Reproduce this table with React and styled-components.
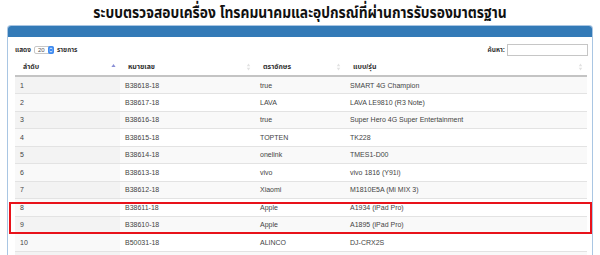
import React from "react";
import styled, { createGlobalStyle } from "styled-components";

const rows = [
  ["1", "B38618-18", "true", "SMART 4G Champion"],
  ["2", "B38617-18", "LAVA", "LAVA LE9810 (R3 Note)"],
  ["3", "B38616-18", "true", "Super Hero 4G Super Entertainment"],
  ["4", "B38615-18", "TOPTEN", "TK228"],
  ["5", "B38614-18", "onelink", "TMES1-D00"],
  ["6", "B38613-18", "vivo", "vivo 1816 (Y91i)"],
  ["7", "B38612-18", "Xiaomi", "M1810E5A (Mi MIX 3)"],
  ["8", "B38611-18", "Apple", "A1934 (iPad Pro)"],
  ["9", "B38610-18", "Apple", "A1895 (iPad Pro)"],
  ["10", "B50031-18", "ALINCO", "DJ-CRX2S"],
  ["", "", "", ""],
];

const columns = [
  { label: "ลำดับ", width: 105, active: true },
  { label: "หมายเลข", width: 135 },
  { label: "ตราอักษร", width: 90 },
  { label: "แบบ/รุ่น", width: 242 },
];

const ROW_H = 17.5;

function SortIcon({ active }) {
  if (active) {
    return (
      <svg width="5" height="8" viewBox="0 0 5 8">
        <path d="M2.5 1 L4.6 4 L0.4 4 Z" fill="#8a8fd6" />
      </svg>
    );
  }
  return (
    <svg width="5" height="8" viewBox="0 0 5 8">
      <path d="M2.5 0.5 L4.2 3.2 L0.8 3.2 Z" fill="#e2e2e2" />
      <path d="M2.5 7.5 L4.2 4.8 L0.8 4.8 Z" fill="#e2e2e2" />
    </svg>
  );
}

export default function App() {
  return (
    <>
      <GlobalStyle />
      <Page>
        <Title>ระบบตรวจสอบเครื่อง โทรคมนาคมและอุปกรณ์ที่ผ่านการรับรองมาตรฐาน</Title>
        <Panel>
          <PanelHeading />
          <PanelBody>
            <Controls>
              <LengthControl>
                แสดง
                <Select>
                  <span>20</span>
                  <Stepper>
                    <svg width="4" height="6" viewBox="0 0 4 6">
                      <path d="M0.5 2.3 L2 0.8 L3.5 2.3" stroke="#fff" strokeWidth="0.8" fill="none" />
                      <path d="M0.5 3.7 L2 5.2 L3.5 3.7" stroke="#fff" strokeWidth="0.8" fill="none" />
                    </svg>
                  </Stepper>
                </Select>
                รายการ
              </LengthControl>
              <SearchControl>
                ค้นหา:
                <SearchInput />
              </SearchControl>
            </Controls>
            <TableWrap>
              <Table>
                <colgroup>
                  {columns.map((c) => (
                    <col key={c.label} style={{ width: c.width }} />
                  ))}
                </colgroup>
                <thead>
                  <tr>
                    {columns.map((c) => (
                      <Th key={c.label}>
                        <HeadInner>
                          <span>{c.label}</span>
                          <SortIcon active={c.active} />
                        </HeadInner>
                      </Th>
                    ))}
                  </tr>
                </thead>
                <tbody>
                  {rows.map((r, i) => (
                    <Tr key={i} $odd={i % 2 === 0}>
                      {r.map((v, j) => (
                        <Td key={j} $sorted={j === 0}>
                          {v}
                        </Td>
                      ))}
                    </Tr>
                  ))}
                </tbody>
              </Table>
              <Highlight $top={19 + 7 * ROW_H + 2.5} $height={32} />
            </TableWrap>
          </PanelBody>
        </Panel>
      </Page>
    </>
  );
}

const GlobalStyle = createGlobalStyle`
  html, body {
    margin: 0;
    padding: 0;
    background: #fff;
    overflow: hidden;
  }
  body {
    font-family: "Liberation Sans", "Noto Sans Thai", "Noto Sans", Arial, sans-serif;
    color: #333;
  }
`;

const Page = styled.div`
  width: 600px;
  height: 255px;
  padding-top: 2px;
  box-sizing: border-box;
  overflow: hidden;
`;

const Title = styled.h1`
  margin: 0;
  height: 22px;
  font-size: 13.8px;
  line-height: 21px;
  font-weight: bold;
  text-align: center;
  color: #111;
  transform: scaleY(1.2);
`;

const Panel = styled.div`
  margin: 1px 7px 0 7px;
  border: 1px solid #a9c6e3;
  border-bottom: none;
  border-radius: 4px 4px 0 0;
  height: 240px;
`;

const PanelHeading = styled.div`
  height: 11px;
  background: #337ab7;
  border-radius: 3px 3px 0 0;
`;

const PanelBody = styled.div`
  padding: 6px 4px 0 7px;
`;

const Controls = styled.div`
  display: flex;
  justify-content: space-between;
  align-items: center;
  height: 13px;
  font-size: 6.5px;
  font-weight: bold;
  color: #333;
  margin-bottom: 2px;
`;

const LengthControl = styled.div`
  display: flex;
  align-items: center;
  gap: 3px;
`;

const Select = styled.div`
  display: flex;
  align-items: center;
  justify-content: space-between;
  width: 20px;
  height: 8px;
  border: 1px solid #c8c8c8;
  border-radius: 2px;
  font-weight: normal;
  font-size: 6px;
  padding-left: 3px;
  box-sizing: border-box;
  color: #555;
  background: #fff;
`;

const Stepper = styled.span`
  display: flex;
  align-items: center;
  justify-content: center;
  width: 6px;
  height: 8px;
  margin-right: -1px;
  background: #3d8bf2;
  border-radius: 2px;
`;

const SearchControl = styled.div`
  display: flex;
  align-items: center;
  gap: 2px;
`;

const SearchInput = styled.div`
  width: 81px;
  height: 12px;
  border: 1px solid #c6c6c6;
  box-sizing: border-box;
  background: #fff;
`;

const TableWrap = styled.div`
  position: relative;
`;

const Table = styled.table`
  border-collapse: collapse;
  table-layout: fixed;
  width: 572px;
  font-size: 7px;
`;

const Th = styled.th`
  height: 17px;
  padding: 0 4px 0 8px;
  text-align: left;
  font-weight: bold;
  color: #333;
  border-bottom: 2px solid #c4c4c4;
`;

const HeadInner = styled.div`
  display: flex;
  align-items: center;
  justify-content: space-between;
`;

const Tr = styled.tr`
  height: ${ROW_H}px;
  background: ${(p) => (p.$odd ? "#f9f9f9" : "#fff")};
`;

const Td = styled.td`
  padding: 0 5px;
  border-top: 1px solid #e3e3e3;
  color: #444;
  white-space: nowrap;
  background: ${(p) => (p.$sorted ? "rgba(0,0,0,0.025)" : "transparent")};
`;

const Highlight = styled.div`
  position: absolute;
  left: -6px;
  right: -4px;
  top: ${(p) => p.$top}px;
  height: ${(p) => p.$height}px;
  border: 2px solid #e8121a;
  box-sizing: border-box;
  pointer-events: none;
`;
